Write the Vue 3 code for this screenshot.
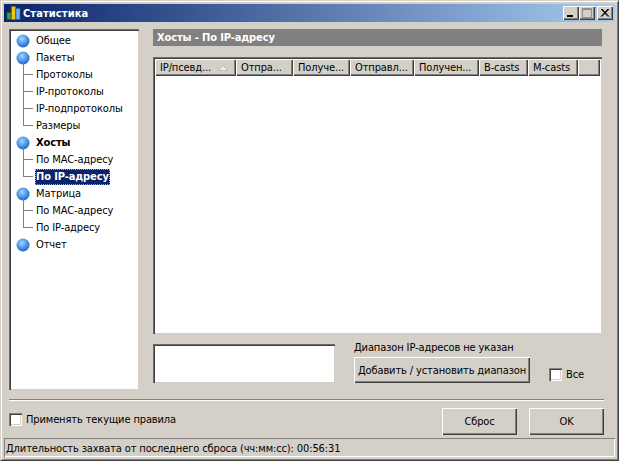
<script setup>
const tree = [
  { t: 'Общее' },
  { t: 'Пакеты' },
  { t: 'Протоколы', c: 1 },
  { t: 'IP-протоколы', c: 1 },
  { t: 'IP-подпротоколы', c: 1 },
  { t: 'Размеры', c: 1, last: 1 },
  { t: 'Хосты', bold: 1 },
  { t: 'По MAC-адресу', c: 1 },
  { t: 'По IP-адресу', c: 1, last: 1, sel: 1 },
  { t: 'Матрица' },
  { t: 'По MAC-адресу', c: 1 },
  { t: 'По IP-адресу', c: 1, last: 1 },
  { t: 'Отчет' },
]
const cols = [
  { t: 'IP/псевд...', w: 81, sort: 1 },
  { t: 'Отпра...', w: 57 },
  { t: 'Получе...', w: 57 },
  { t: 'Отправл...', w: 64 },
  { t: 'Получен...', w: 65 },
  { t: 'B-casts', w: 49 },
  { t: 'M-casts', w: 50 },
]
</script>

<template>
  <div class="window">
    <div class="titlebar">
      <svg class="appicon" width="16" height="16" viewBox="0 0 16 16">
        <rect x="2" y="7.5" width="4" height="7" fill="#3f9b3f" stroke="#1d5a1d" stroke-width="0.6" />
        <rect x="6.5" y="1.5" width="4" height="13" fill="#f0c419" stroke="#8a6d08" stroke-width="0.6" />
        <rect x="11" y="3.5" width="4" height="11" fill="#6fb0e8" stroke="#2b5f96" stroke-width="0.6" />
      </svg>
      <span class="title">Статистика</span>
      <div class="caption-btns">
        <button class="cap"><svg width="16" height="14" viewBox="0 0 16 14"><rect x="4" y="9" width="6" height="2" fill="#000" /></svg></button>
        <button class="cap"><svg width="16" height="14" viewBox="0 0 16 14"><path d="M3.5 2.5h9v9h-9z M3.5 3.5h9" fill="none" stroke="#8f8c85" /></svg></button>
        <button class="cap close"><svg width="16" height="14" viewBox="0 0 16 14"><path d="M4 3l7 7.5M5 3l7 7.5M11 3l-7 7.5M12 3l-7 7.5" fill="none" stroke="#000" stroke-width="1" /></svg></button>
      </div>
    </div>

    <div class="body">
      <div class="main">
        <div class="tree sunken">
          <div v-for="(n, i) in tree" :key="i" class="row" :class="{ child: n.c, lastc: n.last, bold: n.bold }">
            <svg v-if="!n.c" class="ball" width="14" height="14" viewBox="0 0 14 14">
              <defs>
                <radialGradient :id="'b' + i" cx="0.42" cy="0.35" r="0.7">
                  <stop offset="0" stop-color="#a8d4fb" />
                  <stop offset="0.55" stop-color="#4a97ea" />
                  <stop offset="1" stop-color="#1e5cb4" />
                </radialGradient>
              </defs>
              <circle cx="7" cy="7" r="6.5" :fill="'url(#b' + i + ')'" />
            </svg>
            <span class="label" :class="{ sel: n.sel }">{{ n.t }}</span>
          </div>
        </div>

        <div class="right">
          <div class="heading">Хосты - По IP-адресу</div>
          <div class="table sunken">
            <div class="thead">
              <div v-for="c in cols" :key="c.t" class="th" :style="{ width: c.w + 'px' }">
                <span>{{ c.t }}</span>
                <svg v-if="c.sort" class="sort" width="10" height="6" viewBox="0 0 10 6"><path d="M5 0.5L9.5 5.5H0.5z" fill="#f2efe8" stroke="#aaa79f" stroke-width="0.6" /></svg>
              </div>
              <div class="th fill"></div>
            </div>
          </div>
          <div class="lower">
            <div class="rangebox sunken"></div>
            <div class="rangectl">
              <div class="rangelabel">Диапазон IP-адресов не указан</div>
              <button class="btn addbtn">Добавить / установить диапазон</button>
            </div>
            <label class="check allcheck"><span class="box"></span>Все</label>
          </div>
        </div>
      </div>

      <div class="sep"></div>

      <div class="actions">
        <label class="check"><span class="box"></span>Применять текущие правила</label>
        <div class="actbtns">
          <button class="btn act">Сброс</button>
          <button class="btn act">OK</button>
        </div>
      </div>
    </div>

    <div class="status">Длительность захвата от последнего сброса (чч:мм:сс): 00:56:31</div>
  </div>
</template>

<style>
html, body { margin: 0; padding: 0; background: #d4d0c8; }
</style>

<style scoped>
.window {
  width: 619px;
  height: 461px;
  box-sizing: border-box;
  background: #d4d0c8;
  border: 1px solid;
  border-color: #d4d0c8 #404040 #404040 #d4d0c8;
  box-shadow: inset 1px 1px 0 #fff, inset -1px -1px 0 #808080;
  padding: 3px 3px 3px 3px;
  display: flex;
  flex-direction: column;
  font-family: "DejaVu Sans Condensed", "DejaVu Sans", sans-serif;
  font-stretch: condensed;
  font-size: 11px;
  letter-spacing: -0.12px;
  color: #000;
  overflow: hidden;
}
button { font: inherit; font-stretch: condensed; letter-spacing: inherit; color: inherit; padding: 0; margin: 0; }
.titlebar {
  height: 18px;
  flex: none;
  display: flex;
  align-items: center;
  background: linear-gradient(90deg, #0a246a, #a6caf0);
  color: #fff;
  padding: 0 2px 0 1px;
}
.appicon { flex: none; margin-right: 2px; }
.title { font-weight: bold; font-size: 11px; letter-spacing: 0.1px; }
.caption-btns { margin-left: auto; display: flex; }
.cap {
  width: 16px;
  height: 14px;
  box-sizing: border-box;
  background: #d4d0c8;
  border: 0;
  box-shadow: inset 1px 1px 0 #fff, inset -1px -1px 0 #404040, inset -2px -2px 0 #808080;
  display: block;
}
.cap svg { display: block; }
.close { margin-left: 2px; }
.body {
  flex: 1;
  display: flex;
  flex-direction: column;
  padding: 7px 11px 0 5px;
  min-height: 0;
}
.main { display: flex; height: 361px; flex: none; }
.sunken {
  box-sizing: border-box;
  background: #fff;
  border: 0;
  box-shadow: inset 1px 1px 0 #6e6c67, inset 2px 2px 0 #404040, inset -1px -1px 0 #d4d0c8, inset -2px -2px 0 #fff;
}
.tree {
  width: 130px;
  flex: none;
  padding: 3px 0 0 5px;
}
.row {
  height: 17px;
  display: flex;
  align-items: center;
  position: relative;
  white-space: nowrap;
}
.ball { flex: none; margin: 0 6px 0 2px; }
.child .label { margin-left: 21px; padding: 0 1px; line-height: 16px; height: 16px; }
.child::before {
  content: "";
  position: absolute;
  left: 9px;
  top: -3px;
  bottom: 0;
  width: 9px;
  border-left: 1px solid #808080;
}
.child.lastc::before { bottom: 8px; border-bottom: 1px solid #808080; }
.child::after {
  content: "";
  position: absolute;
  left: 9px;
  top: 8px;
  width: 10px;
  height: 1px;
  background: #808080;
}
.bold { font-weight: bold; }
.label { display: inline-block; }
.sel {
  background: #0a246a;
  color: #fff;
  font-weight: bold;
  outline: 1px dotted #d4a84a;
  outline-offset: -1px;
}
.right {
  margin-left: 14px;
  width: 449px;
  flex: none;
  display: flex;
  flex-direction: column;
}
.heading {
  height: 17px;
  line-height: 17px;
  background: #808080;
  color: #fff;
  font-weight: bold;
  padding-left: 4px;
  flex: none;
}
.table {
  margin-top: 11px;
  height: 277px;
  flex: none;
  padding: 2px;
}
.thead { display: flex; height: 17px; }
.th {
  box-sizing: border-box;
  flex: none;
  height: 17px;
  background: #d4d0c8;
  box-shadow: inset 1px 1px 0 #fff, inset -1px -1px 0 #404040, inset -2px -2px 0 #808080;
  padding-left: 5px;
  line-height: 17px;
  white-space: nowrap;
  overflow: hidden;
  display: flex;
  align-items: center;
  gap: 7px;
}
.fill { flex: 1; }
.sort { flex: none; }
.lower { display: flex; margin-top: 10px; }
.rangebox {
  width: 182px;
  height: 39px;
  flex: none;
}
.rangectl { margin-left: 19px; width: 176px; flex: none; }
.rangelabel { height: 13px; line-height: 13px; margin-top: -3px; margin-bottom: 3px; white-space: nowrap; }
.btn {
  box-sizing: border-box;
  background: #d4d0c8;
  border: 0;
  box-shadow: inset 1px 1px 0 #fff, inset -1px -1px 0 #404040, inset -2px -2px 0 #808080;
  white-space: nowrap;
}
.addbtn { width: 176px; height: 26px; display: block; }
.check { display: flex; align-items: center; white-space: nowrap; }
.box {
  width: 13px;
  height: 13px;
  box-sizing: border-box;
  background: #fff;
  flex: none;
  box-shadow: inset 1px 1px 0 #808080, inset 2px 2px 0 #404040, inset -1px -1px 0 #fff, inset -2px -2px 0 #d4d0c8;
  margin-right: 4px;
}
.allcheck { margin: 24px 0 0 19px; height: 13px; align-self: flex-start; }
.sep {
  margin-top: 9px;
  height: 2px;
  border-top: 1px solid #808080;
  border-bottom: 1px solid #fff;
  box-sizing: border-box;
  flex: none;
}
.actions {
  flex: none;
  display: flex;
  align-items: flex-start;
  margin-top: 7px;
  height: 30px;
}
.actions .check { margin-top: 5px; }
.actbtns { margin-left: auto; display: flex; gap: 12px; }
.act { width: 75px; height: 27px; }
.status {
  flex: none;
  margin-top: auto;
  height: 19px;
  line-height: 21px;
  padding-left: 2px;
  box-shadow: inset 1px 1px 0 #808080, inset -1px -1px 0 #fff;
  white-space: nowrap;
}
</style>
